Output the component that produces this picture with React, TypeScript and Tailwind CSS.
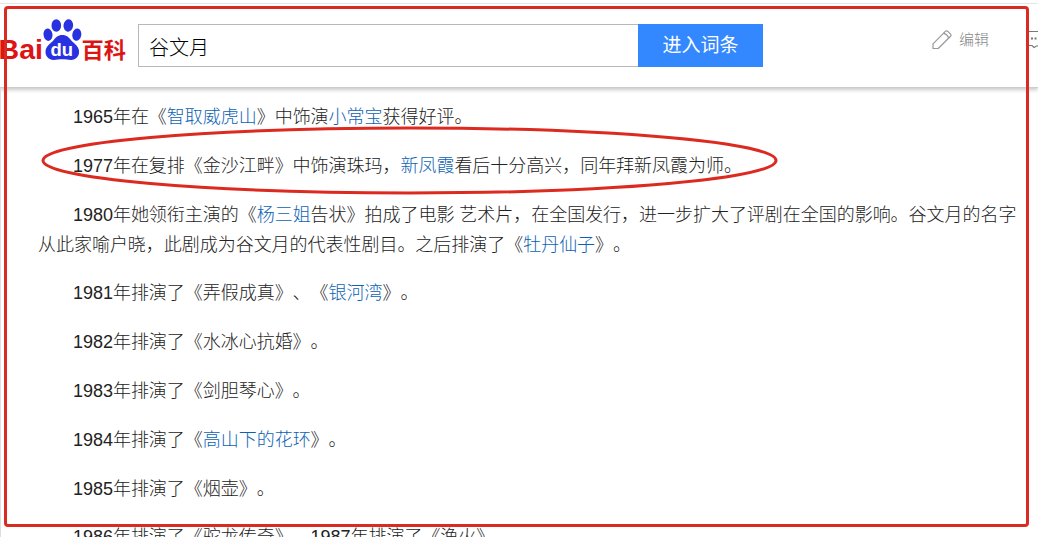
import React from 'react';

interface Segment {
  text: string;
  link?: boolean;
}

const paragraphs: Segment[][] = [
  [
    { text: '1965年在《' },
    { text: '智取威虎山', link: true },
    { text: '》中饰演' },
    { text: '小常宝', link: true },
    { text: '获得好评。' },
  ],
  [
    { text: '1977年在复排《金沙江畔》中饰演珠玛，' },
    { text: '新凤霞', link: true },
    { text: '看后十分高兴，同年拜新凤霞为师。' },
  ],
  [
    { text: '1980年她领衔主演的《' },
    { text: '杨三姐', link: true },
    { text: '告状》拍成了电影 艺术片，在全国发行，进一步扩大了评剧在全国的影响。谷文月的名字从此家喻户晓，此剧成为谷文月的代表性剧目。之后排演了《' },
    { text: '牡丹仙子', link: true },
    { text: '》。' },
  ],
  [{ text: '1981年排演了《弄假成真》、《' }, { text: '银河湾', link: true }, { text: '》。' }],
  [{ text: '1982年排演了《水冰心抗婚》。' }],
  [{ text: '1983年排演了《剑胆琴心》。' }],
  [{ text: '1984年排演了《' }, { text: '高山下的花环', link: true }, { text: '》。' }],
  [{ text: '1985年排演了《烟壶》。' }],
  [{ text: '1986年排演了《驼龙传奇》、1987年排演了《渔火》。' }],
];

const Logo: React.FC = () => (
  <svg className="block h-[48px] w-[128px] shrink-0" viewBox="0 0 128 48">
    <g fill="#dd1414" fontWeight="700">
      <text x="-1.5" y="41" fontSize="28.5" textLength="44.5" lengthAdjust="spacingAndGlyphs" fontFamily="'Liberation Sans', Arial, sans-serif">Bai</text>
      <text x="81.5" y="39.5" fontSize="22" textLength="44.5" lengthAdjust="spacingAndGlyphs" fontFamily="'Noto Sans CJK SC', sans-serif">百科</text>
    </g>
    <g fill="#2932e1">
      <ellipse cx="48" cy="16.7" rx="4.5" ry="6.2" transform="rotate(-8 48 16.7)" />
      <ellipse cx="56.3" cy="7.5" rx="4.8" ry="6.2" />
      <ellipse cx="68.3" cy="7.5" rx="4.8" ry="6.2" transform="rotate(8 68.3 7.5)" />
      <ellipse cx="76.8" cy="16.7" rx="4.5" ry="6.2" transform="rotate(10 76.8 16.7)" />
      <path d="M62.3 17c-4.5 0-6.6 2.6-8.8 5.2-2.6 3.100-8 5.8-8 11.5 0 4.6 3.2 8.2 8 8.2 3.2 0 5.6-.7 8.8-.7s5.6.7 8.8.7c4.8 0 8-3.6 8-8.2 0-5.7-5.4-8.4-8-11.5-2.2-2.6-4.3-5.2-8.8-5.2z" />
    </g>
    <text x="50.5" y="38" fontSize="19" fontWeight="700" fill="#fff" textLength="22.5" lengthAdjust="spacingAndGlyphs" fontFamily="'Liberation Sans', Arial, sans-serif">du</text>
  </svg>
);

const PencilIcon: React.FC = () => (
  <svg className="size-5 shrink-0" viewBox="0 0 20 20" fill="none" stroke="#999" strokeWidth="1.2" strokeLinejoin="round">
    <path d="M1 18.500v-4.7L13.6 1.2q1-.8 2 0l3 3q.8 1 0 2L6.2 18.500z" />
    <path d="M11.6 3.3c2.2.2 4.7 2.6 5 4.9" />
  </svg>
);

// Only the left part fits in the viewport
const CommentIcon: React.FC = () => (
  <svg className="h-5 w-2.5 shrink-0" viewBox="0 0 10 20" fill="none" stroke="#777" strokeWidth="1.2">
    <path d="M0 1.500h10M1 15.500h3l2 2L8.500 16H10" />
    <path d="M3 8.500h2M6.500 8.500h2" strokeWidth="2" />
  </svg>
);

const Header: React.FC = () => (
  <header className="flex h-[84px] items-start border-b border-[#ccc] bg-white shadow-[0_2px_4px_rgba(0,0,0,0.22)]">
    <div className="mt-[14px] w-[138px] shrink-0">
      <Logo />
    </div>
    <div className="mt-5 flex h-[43px] w-[625px] shrink-0">
      <div className="flex flex-1 items-center border border-r-0 border-[#b8b8b8] pl-2.5 pt-[5px] text-[20px] text-black">谷文月</div>
      <button className="w-[125px] bg-[#3388ff] pt-px text-[19px] font-normal text-white">进入词条</button>
    </div>
    <div className="ml-[169px] mt-[23px] flex items-center">
      <PencilIcon />
      <span className="ml-[7px] w-[69px] pt-px text-[15px] leading-6 text-[#888]">编辑</span>
      <CommentIcon />
    </div>
  </header>
);

const Annotations: React.FC = () => (
  <>
    <div className="pointer-events-none absolute left-1 top-1.5 h-[521px] w-[1025px] rounded-[4px] border-[3px] border-[#d92b21]" />
    <svg className="pointer-events-none absolute left-[40px] top-[125px]" width="740" height="72" viewBox="0 0 740 72" fill="none">
      <ellipse cx="369.5" cy="35.5" rx="366.5" ry="32.5" stroke="#dd2a20" strokeWidth="3" />
    </svg>
  </>
);

export default function App() {
  return (
    <div className="relative h-[537px] w-[1038px] overflow-hidden bg-white pt-[3px] font-['Liberation_Sans','Noto_Sans_CJK_SC',sans-serif] font-light [text-spacing-trim:space-all]">
      <div className="h-px bg-[#ececec]" />
      <Header />
      <main className="border-l border-[#ddd] pl-[37px] pr-[18px] pt-[14px] text-[18px] leading-[30px] tracking-[-0.03px] text-[#222]">
        {paragraphs.map((segments, i) => (
          <p key={i} className="mb-[18.8px] indent-[35px]">
            {segments.map((s, j) =>
              s.link ? (
                <a key={j} className="text-[#0c62b4]">{s.text}</a>
              ) : (
                <React.Fragment key={j}>{s.text}</React.Fragment>
              ),
            )}
          </p>
        ))}
      </main>
      <Annotations />
    </div>
  );
}
